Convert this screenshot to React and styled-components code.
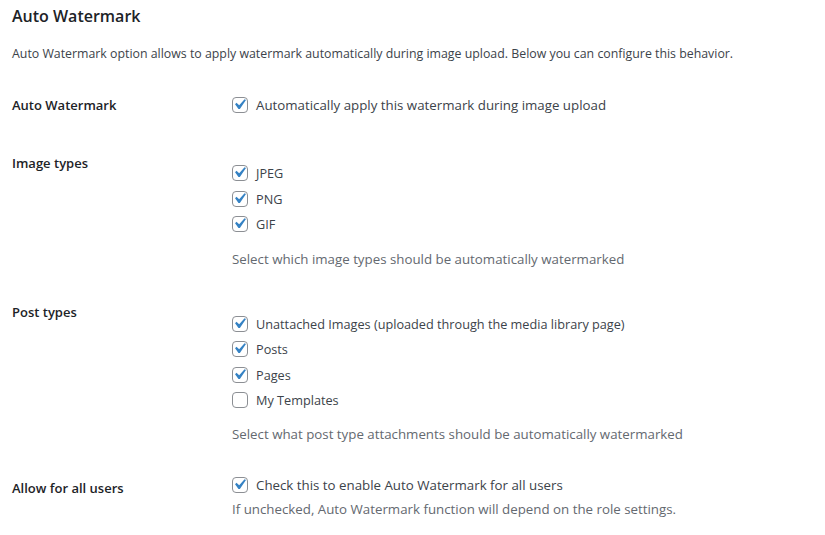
import React from 'react';
import styled, { createGlobalStyle } from 'styled-components';

const GlobalStyle = createGlobalStyle`
  body {
    margin: 0;
    background: #ffffff;
    font-family: "Open Sans", "Noto Sans", sans-serif;
    font-size: 13px;
    color: #3c434a;
  }
`;

const Page = styled.div`
  padding: 4px 12px 0 12px;
`;

const Title = styled.h2`
  margin: 0;
  font-size: 16px;
  line-height: 24px;
  font-weight: 600;
  color: #1d2327;
`;

const Intro = styled.p`
  margin: 17px 0 0;
  font-size: 12.35px;
  line-height: 18px;
`;

const Row = styled.div`
  display: grid;
  grid-template-columns: 220px 1fr;
  align-items: start;
  margin-top: ${({ $gap }) => $gap}px;
`;

const Label = styled.div`
  padding-top: ${({ $pt }) => $pt || 0}px;
  line-height: 18px;
  font-weight: 600;
  color: #1d2327;
`;

const Field = styled.div`
  padding-top: ${({ $pt }) => $pt || 0}px;
`;

const Option = styled.label`
  display: flex;
  align-items: center;
  height: 25.5px;
  gap: 8px;
  font-size: ${({ $size }) => $size || 12.7}px;
`;

const Box = styled.span`
  position: relative;
  flex: none;
  width: 16px;
  height: 16px;
  box-sizing: border-box;
  border: 1px solid #8c8f94;
  border-radius: 4px;
  background: #fff;

  svg {
    position: absolute;
    left: -4px;
    top: -4px;
    width: 21px;
    height: 21px;
  }
`;

const Description = styled.p`
  margin: ${({ $mt }) => $mt}px 0 0;
  font-size: 13.3px;
  line-height: 18px;
  color: #646970;
`;

const Check = ({ checked, size, children }) => (
  <Option $size={size}>
    <Box>
      {checked && (
        <svg viewBox="0 0 20 20">
          <path d="M14.83 4.89l1.34.94-5.81 8.38H9.02L5.78 9.67l1.34-1.25 2.57 2.4z" fill="#3582c4" />
        </svg>
      )}
    </Box>
    {children}
  </Option>
);

export default function App() {
  return (
    <Page>
      <GlobalStyle />
      <Title>Auto Watermark</Title>
      <Intro>
        Auto Watermark option allows to apply watermark automatically during image upload. Below you can configure this behavior.
      </Intro>

      <Row $gap={29}>
        <Label $pt={4}>Auto Watermark</Label>
        <Field>
          <Check checked size={13.3}>Automatically apply this watermark during image upload</Check>
        </Field>
      </Row>

      <Row $gap={36}>
        <Label>Image types</Label>
        <Field $pt={7}>
          <Check checked>JPEG</Check>
          <Check checked>PNG</Check>
          <Check checked>GIF</Check>
          <Description $mt={13}>Select which image types should be automatically watermarked</Description>
        </Field>
      </Row>

      <Row $gap={35}>
        <Label>Post types</Label>
        <Field $pt={8}>
          <Check checked>Unattached Images (uploaded through the media library page)</Check>
          <Check checked>Posts</Check>
          <Check checked>Pages</Check>
          <Check>My Templates</Check>
          <Description $mt={12}>Select what post type attachments should be automatically watermarked</Description>
        </Field>
      </Row>

      <Row $gap={29}>
        <Label $pt={7}>Allow for all users</Label>
        <Field>
          <Check checked size={13.3}>Check this to enable Auto Watermark for all users</Check>
          <Description $mt={2}>If unchecked, Auto Watermark function will depend on the role settings.</Description>
        </Field>
      </Row>
    </Page>
  );
}
